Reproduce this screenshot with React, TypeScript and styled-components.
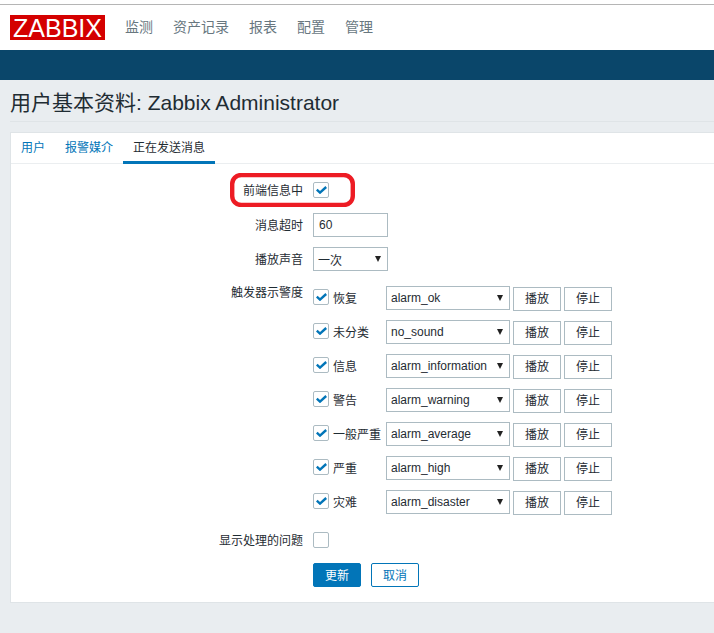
import styled, { createGlobalStyle } from "styled-components";

const GlobalStyle = createGlobalStyle`
  html, body {
    margin: 0;
    padding: 0;
    background: #e9edf0;
  }
  body {
    font-family: "Liberation Sans", Arial, "Noto Sans CJK SC", sans-serif;
    font-size: 12px;
    color: #1f2c33;
  }
`;

const Page = styled.div`
  width: 714px;
  height: 633px;
  overflow: hidden;
  display: flex;
  flex-direction: column;
`;

const Header = styled.header`
  height: 50px;
  padding-top: 4px;
  box-sizing: border-box;
  background: #fff;
`;

const TopLine = styled.div`
  height: 1px;
  background: #b5b5b5;
`;

const TopBar = styled.div`
  display: flex;
  align-items: flex-start;
  padding: 10px 0 0 10px;
  gap: 20px;
`;

const Logo = styled.div`
  width: 95px;
  height: 25px;
  background: #d40000;
  color: #fff;
  font-size: 25px;
  line-height: 26px;
  text-align: center;
`;

const MainNav = styled.nav`
  display: flex;
  gap: 20px;
  line-height: 25px;
  font-size: 14px;
  color: #68777f;
`;

const SubBar = styled.div`
  height: 30px;
  background: #0a466a;
`;

const Title = styled.h1`
  margin: 0 0 0 10px;
  padding: 4px 0 0;
  height: 37px;
  border-bottom: 1px solid #dfe4e7;
  font-size: 21px;
  font-weight: 400;
  line-height: 38px;
`;

const Panel = styled.div`
  margin: 10px 0 0 10px;
  height: 469px;
  background: #fff;
  border: 1px solid #dfe4e7;
  border-right: none;
`;

const Tabs = styled.div`
  display: flex;
  height: 30px;
  border-bottom: 1px solid #ebeef0;
`;

const Tab = styled.div<{ $active?: boolean }>`
  box-sizing: border-box;
  padding: 0 10px;
  height: 31px;
  line-height: 31px;
  color: ${(p) => (p.$active ? "#1f2c33" : "#0275b8")};
  border-bottom: ${(p) => (p.$active ? "3px solid #0275b8" : "none")};
`;

const Form = styled.div`
  display: grid;
  grid-template-columns: 292px 1fr;
  column-gap: 10px;
  padding-top: 14px;
`;

const Label = styled.div`
  text-align: right;
  padding-top: 1px;
  line-height: 24px;
`;

const TopLabel = styled(Label)`
  margin-top: 5px;
  line-height: 12px;
`;

const Cell = styled.div<{ $gap?: number }>`
  height: 24px;
  margin-bottom: ${(p) => p.$gap ?? 10}px;
  display: flex;
  align-items: center;
`;

const CheckBox = styled.span`
  box-sizing: border-box;
  width: 16px;
  height: 16px;
  flex: none;
  background: #fff;
  border: 1px solid #acbbc2;
  border-radius: 2px;
  display: inline-flex;
  align-items: center;
  justify-content: center;
`;

const TextInput = styled.div`
  box-sizing: border-box;
  width: 75px;
  height: 24px;
  border: 1px solid #acbbc2;
  padding-left: 5px;
  line-height: 22px;
`;

const Select = styled.div<{ $width: number }>`
  box-sizing: border-box;
  width: ${(p) => p.$width}px;
  height: 24px;
  border: 1px solid #acbbc2;
  padding: 0 5px 0 4px;
  display: flex;
  align-items: center;
  justify-content: space-between;
  flex: none;
`;

const Arrow = styled.span`
  width: 0;
  height: 0;
  border-left: 3px solid transparent;
  border-right: 3px solid transparent;
  border-top: 6px solid #222;
  margin-right: 1px;
`;

const SoundList = styled.div`
  display: flex;
  flex-direction: column;
  gap: 10px;
  margin: 5px 0 14px;
`;

const SoundRow = styled.div`
  display: flex;
  align-items: center;
  height: 24px;
`;

const SoundLabel = styled.div`
  display: flex;
  align-items: center;
  margin-bottom: 2px;
  flex: none;
`;

const SoundName = styled.span`
  width: 53px;
  margin-left: 4px;
  flex: none;
`;

const Button = styled.div`
  box-sizing: border-box;
  width: 48px;
  height: 24px;
  margin: 1px 0 0 3px;
  border: 1px solid #acbbc2;
  text-align: center;
  line-height: 23px;
  background: #fff;
  flex: none;
`;

const Actions = styled.div`
  display: flex;
  gap: 10px;
`;

const ActionButton = styled.div<{ $primary?: boolean }>`
  box-sizing: border-box;
  width: 48px;
  height: 24px;
  border: 1px solid #0275b8;
  border-radius: 2px;
  text-align: center;
  line-height: 24px;
  color: ${(p) => (p.$primary ? "#fff" : "#0275b8")};
  background: ${(p) => (p.$primary ? "#0275b8" : "#fff")};
`;

const Highlight = styled.svg`
  position: absolute;
  left: 230px;
  top: 173px;
`;

function Check() {
  return (
    <svg width="11" height="8" viewBox="0 0 11 8">
      <path d="M0.8 3.6 L4 6.6 L10.2 1" fill="none" stroke="#0275b8" strokeWidth="2.4" />
    </svg>
  );
}

const sounds = [
  ["恢复", "alarm_ok"],
  ["未分类", "no_sound"],
  ["信息", "alarm_information"],
  ["警告", "alarm_warning"],
  ["一般严重", "alarm_average"],
  ["严重", "alarm_high"],
  ["灾难", "alarm_disaster"],
];

export default function App() {
  return (
    <Page>
      <GlobalStyle />
      <Header>
        <TopLine />
        <TopBar>
          <Logo>ZABBIX</Logo>
          <MainNav>
            <span>监测</span>
            <span>资产记录</span>
            <span>报表</span>
            <span>配置</span>
            <span>管理</span>
          </MainNav>
        </TopBar>
      </Header>
      <SubBar />
      <Title>用户基本资料: Zabbix Administrator</Title>
      <Panel>
        <Tabs>
          <Tab>用户</Tab>
          <Tab>报警媒介</Tab>
          <Tab $active>正在发送消息</Tab>
        </Tabs>
        <Form>
          <Label>前端信息中</Label>
          <Cell $gap={11}>
            <CheckBox>
              <Check />
            </CheckBox>
          </Cell>
          <Label>消息超时</Label>
          <Cell>
            <TextInput>60</TextInput>
          </Cell>
          <Label>播放声音</Label>
          <Cell>
            <Select $width={75}>
              一次
              <Arrow />
            </Select>
          </Cell>
          <TopLabel>触发器示警度</TopLabel>
          <SoundList>
            {sounds.map(([name, sound]) => (
              <SoundRow key={sound}>
                <SoundLabel>
                  <CheckBox>
                    <Check />
                  </CheckBox>
                  <SoundName>{name}</SoundName>
                </SoundLabel>
                <Select $width={124}>
                  {sound}
                  <Arrow />
                </Select>
                <Button>播放</Button>
                <Button>停止</Button>
              </SoundRow>
            ))}
          </SoundList>
          <Label>显示处理的问题</Label>
          <Cell $gap={11}>
            <CheckBox />
          </Cell>
          <div />
          <Actions>
            <ActionButton $primary>更新</ActionButton>
            <ActionButton>取消</ActionButton>
          </Actions>
        </Form>
      </Panel>
      <Highlight width="125" height="34" viewBox="0 0 125 34">
        <rect x="2.2" y="2" width="120.6" height="30" rx="9" fill="none" stroke="#ed1c24" strokeWidth="4.4" />
      </Highlight>
    </Page>
  );
}
